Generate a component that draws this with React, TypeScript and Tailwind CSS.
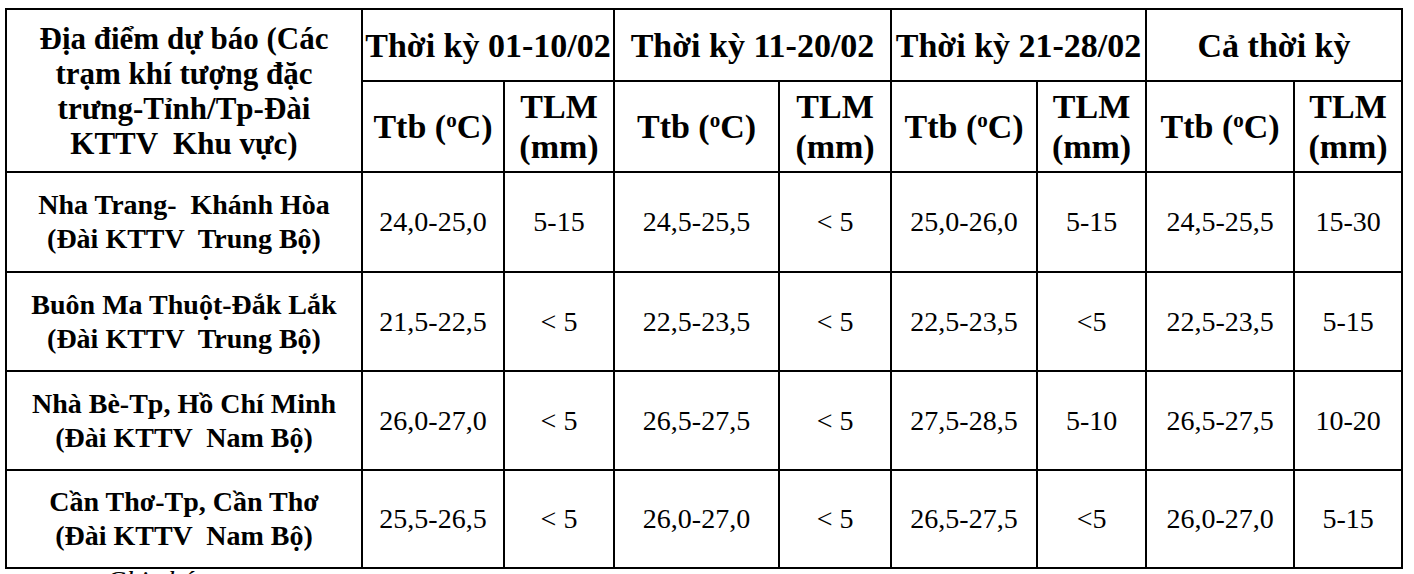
const rows = [
  {
    place: ["Nha Trang-  Khánh Hòa", "(Đài KTTV  Trung Bộ)"],
    values: ["24,0-25,0", "5-15", "24,5-25,5", "< 5", "25,0-26,0", "5-15", "24,5-25,5", "15-30"],
    h: "h-[100px]",
  },
  {
    place: ["Buôn Ma Thuột-Đắk Lắk", "(Đài KTTV  Trung Bộ)"],
    values: ["21,5-22,5", "< 5", "22,5-23,5", "< 5", "22,5-23,5", "<5", "22,5-23,5", "5-15"],
    h: "h-[99px]",
  },
  {
    place: ["Nhà Bè-Tp, Hồ Chí Minh", "(Đài KTTV  Nam Bộ)"],
    values: ["26,0-27,0", "< 5", "26,5-27,5", "< 5", "27,5-28,5", "5-10", "26,5-27,5", "10-20"],
    h: "h-[99px]",
  },
  {
    place: ["Cần Thơ-Tp, Cần Thơ", "(Đài KTTV  Nam Bộ)"],
    values: ["25,5-26,5", "< 5", "26,0-27,0", "< 5", "26,5-27,5", "<5", "26,0-27,0", "5-15"],
    h: "h-[98px]",
  },
];

const periods = ["Thời kỳ 01-10/02", "Thời kỳ 11-20/02", "Thời kỳ 21-28/02", "Cả thời kỳ"];

const Ttb = () => (
  <span className="whitespace-pre">
    Ttb (<span className="relative -top-[11px] text-[21px]">o</span>C)
  </span>
);

const Tlm = () => (
  <div className="leading-[40px]">
    <div>TLM</div>
    <div>(mm)</div>
  </div>
);

const App = () => {
  const cell = "border-2 border-black text-center align-middle p-0";
  return (
    <div className="bg-white min-h-[574px] w-[1414px] overflow-hidden pl-[5px] pt-[8px] text-black [font-family:'Liberation_Serif','Times_New_Roman',serif]">
      <table className="table-fixed border-collapse w-[1396px]">
        <colgroup>
          <col className="w-[356px]" />
          <col className="w-[142px]" />
          <col className="w-[110px]" />
          <col className="w-[165px]" />
          <col className="w-[112px]" />
          <col className="w-[146px]" />
          <col className="w-[109px]" />
          <col className="w-[148px]" />
          <col className="w-[108px]" />
        </colgroup>
        <thead>
          <tr className="h-[72px]">
            <th rowSpan={2} className={`${cell} font-bold text-[31px] leading-[35px]`}>
              <div>Địa điểm dự báo (Các</div>
              <div>trạm khí tượng đặc</div>
              <div>trưng-Tỉnh/Tp-Đài</div>
              <div className="whitespace-pre">KTTV  Khu vực)</div>
            </th>
            {periods.map((p) => (
              <th key={p} colSpan={2} className={`${cell} font-bold text-[34px] whitespace-nowrap`}>
                {p}
              </th>
            ))}
          </tr>
          <tr className="h-[91px]">
            {periods.map((p) => [
              <th key={p + "t"} className={`${cell} font-bold text-[34px]`}>
                <Ttb />
              </th>,
              <th key={p + "l"} className={`${cell} font-bold text-[34px]`}>
                <Tlm />
              </th>,
            ])}
          </tr>
        </thead>
        <tbody>
          {rows.map((r) => (
            <tr key={r.place[0]} className={r.h}>
              <td className={`${cell} font-bold text-[28px] leading-[34px]`}>
                {r.place.map((line) => (
                  <div key={line} className="whitespace-pre">
                    {line}
                  </div>
                ))}
              </td>
              {r.values.map((v, i) => (
                <td key={i} className={`${cell} text-[28px] whitespace-pre`}>
                  {v}
                </td>
              ))}
            </tr>
          ))}
        </tbody>
      </table>
      <p className="pl-[101px] italic text-[28px] leading-[24px]">Ghi chú:</p>
    </div>
  );
};

export default App;
